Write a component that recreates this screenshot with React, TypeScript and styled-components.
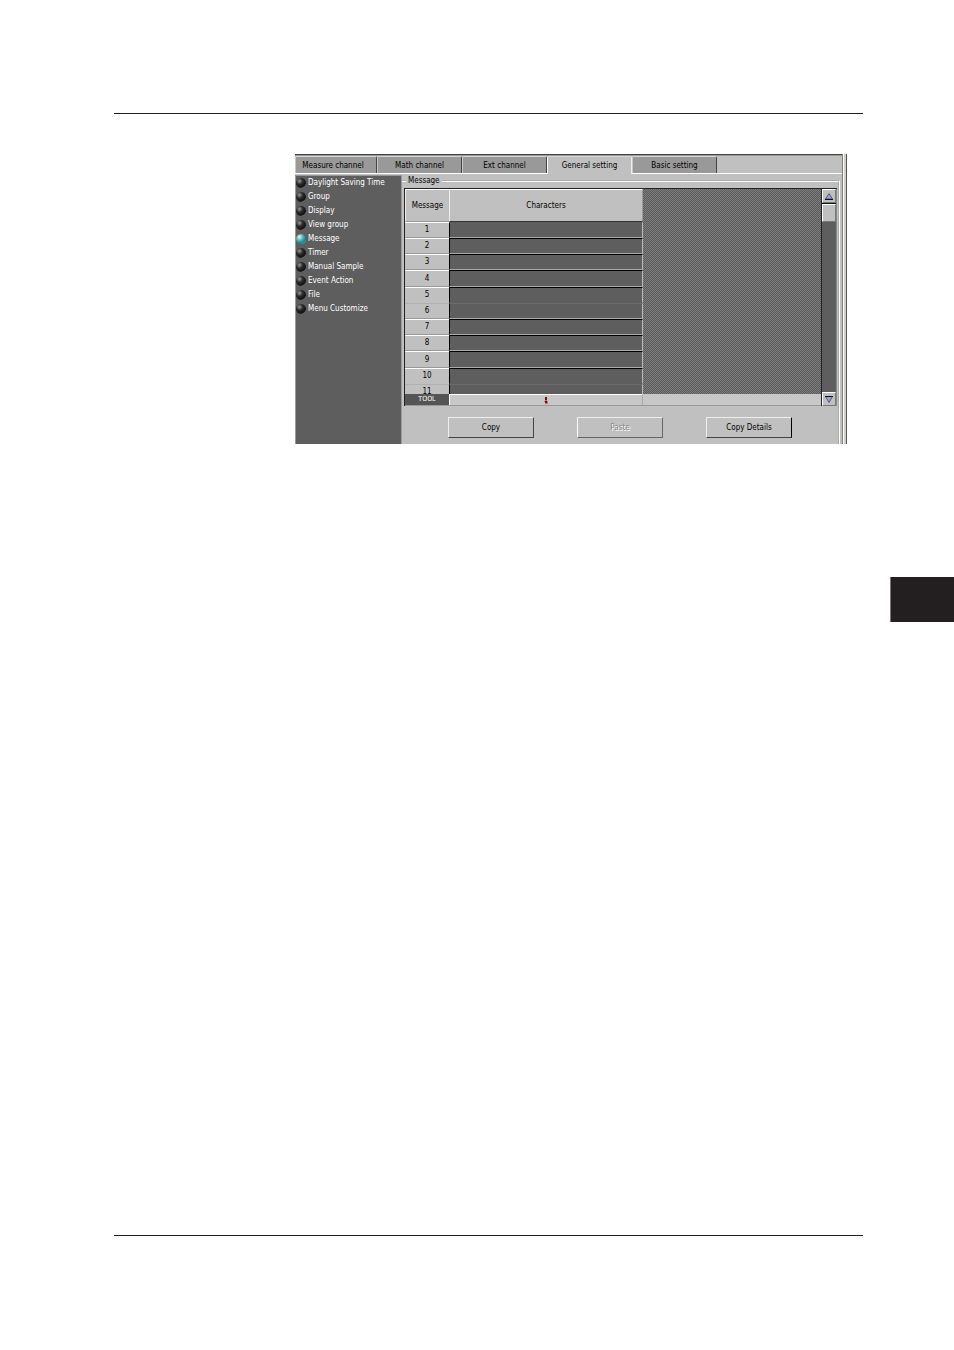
import React, { useState } from "react";
import styled, { createGlobalStyle, css } from "styled-components";

const GlobalStyle = createGlobalStyle`
  *, *::before, *::after { box-sizing: border-box; }
  body { margin: 0; background: #fff; }
  button, input { font: inherit; color: inherit; }
`;

const face = "#c0c0c0";
const shade = "#5e5e5e";
const mid = "#999";

const Page = styled.div`
  display: grid;
  grid-template-columns: 114px minmax(0, 1fr) 91px;
  min-height: 100vh;
  padding: 113px 0 114px;
  font-family: "DejaVu Sans Condensed", "DejaVu Sans", "Liberation Sans", sans-serif;
  font-size: 8px;
  line-height: 12px;
  color: #000;
`;

const Sheet = styled.main`
  grid-column: 2;
  border-top: 1px solid #231f20;
  border-bottom: 1px solid #231f20;
  padding: 40px 16px 40px 181px;
`;

const ThumbTab = styled.aside`
  grid-column: 3;
  justify-self: end;
  width: 64px;
  height: 45px;
  margin-top: 464px;
  background: #231f20;
  border-left: 1px solid #777;
`;

const Window = styled.section`
  display: flex;
  height: 290px;
  overflow: hidden;
  background: ${face};
`;

const Workspace = styled.div`
  flex: 1;
  min-width: 0;
  display: flex;
  flex-direction: column;
  border-top: 1px solid #444;
`;

const WindowEdge = styled.div`
  width: 5px;
  border-left: 1px solid #808080;
  border-right: 1px solid #555;
  background: linear-gradient(90deg, #fff 1px, #d4d0c8 1px);
`;

const TabBar = styled.div`
  display: flex;
  height: 19px;
  padding-top: 1px;
  box-shadow: inset 0 1px #999, inset 0 -1px #fff;
`;

const Tab = styled.button<{ $active: boolean; $clipped?: boolean }>`
  flex: 0 0 ${(p) => (p.$clipped ? 82 : 85)}px;
  min-width: 0;
  height: ${(p) => (p.$active ? 18 : 17)}px;
  padding: 0 ${(p) => (p.$clipped ? 6 : 0)}px 0 0;
  border: 0;
  border-top: 1px solid #d8d8d8;
  border-left: 1px solid ${(p) => (p.$active ? "#fff" : "#c8c8c8")};
  border-right: 1px solid ${(p) => (p.$active ? "#eee" : "#444")};
  border-radius: 2px 2px 0 0;
  background: ${(p) => (p.$active ? face : mid)};
  line-height: 15px;
  white-space: nowrap;
`;

const Body = styled.div`
  flex: 1;
  min-height: 0;
  display: flex;
  padding-top: 1px;
`;

const Sidebar = styled.div`
  flex: 0 0 107px;
  min-width: 0;
  border: solid ${mid};
  border-width: 1px 1px 0;
  background: ${shade};
  color: #fff;
`;

const Option = styled.label`
  display: flex;
  align-items: center;
  gap: 2px;
  height: 14px;
  white-space: nowrap;
`;

const Bullet = styled.input`
  appearance: none;
  flex: none;
  width: 10px;
  height: 10px;
  margin: 0;
  border-radius: 50%;
  background: radial-gradient(circle at 35% 30%, #999 0, #2a2a2a 35%, #111 68%, #aaa 90%);
  &:checked {
    background: radial-gradient(circle at 35% 30%, #d8ffff 0, #4db8bc 35%, #217a80 68%, #cfe8e8 90%);
  }
`;

const Group = styled.fieldset`
  flex: 1;
  min-width: 0;
  margin: 1px 2px 0 0;
  padding: 2px 0 0 2px;
  border: 2px groove #fff;
  border-width: 2px 2px 0 0;
`;

const Legend = styled.legend`
  margin-left: 2px;
  padding: 0 2px;
  line-height: 10px;
`;

const Sheetbox = styled.div`
  display: flex;
  height: 218px;
  border-top: 1px solid #222;
  border-left: 1px solid #222;
  margin-right: 1px;
`;

const Pane = styled.div`
  flex: 1;
  min-width: 0;
  display: flex;
  flex-direction: column;
`;

const Viewport = styled.div`
  flex: 1;
  min-height: 0;
  overflow: hidden;
  background: repeating-conic-gradient(#5c5c5c 0 25%, #7c7c7c 0 50%) 0 0 / 2px 2px;
`;

const Table = styled.table`
  width: 238px;
  table-layout: fixed;
  border-collapse: separate;
  border-spacing: 0;
  background: ${face};
`;

const cell = css`
  padding: 0;
  font-weight: 400;
  text-align: center;
  vertical-align: middle;
`;

const HeadCell = styled.th<{ $narrow?: boolean }>`
  ${cell}
  width: ${(p) => (p.$narrow ? "44px" : "auto")};
  height: 33px;
  border-top: 1px solid #fff;
  border-left: 1px solid #eee;
  border-right: ${(p) => (p.$narrow ? 0 : 1)}px solid ${mid};
  border-bottom: 1px solid ${(p) => (p.$narrow ? "#999" : "#333")};
`;

const NumberCell = styled.th`
  ${cell}
  border-top: 1px solid #fff;
  border-bottom: 1px solid ${mid};
`;

const TextCell = styled.td`
  ${cell}
  background: ${shade};
  border-left: 1px solid #000;
  border-right: 1px solid #bbb;
  border-top: 1px solid #000;
  border-bottom: 1px solid #aaa;
`;

const Row = styled.tr`
  height: 16px;
  &:nth-child(5n + 4) {
    height: 17px;
  }
  &:nth-child(5n) ${TextCell} {
    border-bottom-color: ${shade};
  }
  &:nth-child(5n) ${NumberCell} {
    border-bottom-color: ${face};
  }
  &:nth-child(5n + 6) ${TextCell} {
    border-top-color: #6c6c6c;
  }
  &:nth-child(5n + 6) ${NumberCell} {
    border-top-color: #b0b0b0;
  }
  &:first-child ${TextCell} {
    border-top-color: ${shade};
  }
`;

const CellInput = styled.input`
  display: block;
  width: 100%;
  height: 12px;
  padding: 0 2px;
  border: 0;
  outline: 0;
  background: transparent;
  color: #fff;
`;

const ToolRow = styled.div`
  display: flex;
  height: 12px;
  background: #c8c8c8;
  border-bottom: 1px solid ${mid};
`;

const ToolLabel = styled.div`
  flex: 0 0 44px;
  background: #555;
  color: #fff;
  font-size: 7px;
  line-height: 11px;
  text-align: center;
`;

const ToolSlot = styled.button`
  flex: 0 0 194px;
  display: flex;
  align-items: center;
  justify-content: center;
  padding: 0;
  border: 0;
  border-top: 1px solid #fff;
  border-left: 1px solid #fff;
  border-right: 1px solid #aaa;
  background: #c8c8c8;
`;

const ScrollBar = styled.div`
  flex: 0 0 16px;
  display: flex;
  flex-direction: column;
  border-left: 1px solid #222;
  border-right: 1px solid #888;
  background: ${shade};
`;

const raised = css`
  border: 1px solid;
  border-color: #fff #777 #777 #fff;
  background: ${face};
`;

const ArrowButton = styled.button`
  ${raised}
  flex: 0 0 14px;
  display: flex;
  align-items: center;
  justify-content: center;
  padding: 0;
`;

const Track = styled.div`
  flex: 1;
  border-top: 1px solid #111;
`;

const Thumb = styled.div`
  ${raised}
  height: 18px;
`;

const Actions = styled.div`
  display: flex;
  justify-content: center;
  gap: 43px;
  padding: 11px 2px 0 0;
`;

const Action = styled.button<{ $strong?: boolean }>`
  width: 86px;
  height: 21px;
  padding: 0;
  border: 1px solid;
  border-color: #eee ${(p) => (p.$strong ? "#000" : "#444")} #444 #eee;
  background: ${face};
  white-space: nowrap;
  &:disabled {
    color: #888;
    text-shadow: 1px 1px #fff;
    border-color: #eee #666 #666 #fff;
  }
`;

const tabs = ["Measure channel", "Math channel", "Ext channel", "General setting", "Basic setting"];
const sections = [
  "Daylight Saving Time",
  "Group",
  "Display",
  "View group",
  "Message",
  "Timer",
  "Manual Sample",
  "Event Action",
  "File",
  "Menu Customize",
];
const rows = Array.from({ length: 11 }, (_, i) => i + 1);

function Arrow({ down }: { down?: boolean }) {
  return (
    <svg width="10" height="9" viewBox="0 0 10 9" aria-hidden="true">
      {down ? (
        <>
          <path d="M1.5 1.5 L5 7.5 L8.5 1.5Z" fill="#a0a0d8" stroke="#55557c" />
          <path d="M1 1.5H9" stroke="#111" />
        </>
      ) : (
        <>
          <path d="M1.5 7 L5 1.5 L8.5 7Z" fill="#a0a0d8" stroke="#55557c" />
          <path d="M1 7.5H9" stroke="#111" />
        </>
      )}
    </svg>
  );
}

function ToolMark() {
  return (
    <svg width="4" height="8" viewBox="0 0 4 8" aria-hidden="true">
      <path d="M1 1H3V4H1Z M1 5H3V7H1Z" fill="#8c0808" />
      <path d="M0 5H1V6H0Z M3 5H4V7H3Z M1 7H4V8H1Z M1 4H3V5H1Z" fill="#b07878" />
    </svg>
  );
}

export default function App() {
  const [tab, setTab] = useState("General setting");
  const [section, setSection] = useState("Message");
  return (
    <>
      <GlobalStyle />
      <Page>
        <Sheet>
          <Window aria-label="Settings">
            <Workspace>
              <TabBar role="tablist">
                {tabs.map((name, i) => (
                  <Tab
                    key={name}
                    type="button"
                    role="tab"
                    aria-selected={tab === name}
                    $active={tab === name}
                    $clipped={i === 0}
                    onClick={() => setTab(name)}
                  >
                    {name}
                  </Tab>
                ))}
              </TabBar>
              <Body>
                <Sidebar role="radiogroup" aria-label="Section">
                  {sections.map((name) => (
                    <Option key={name}>
                      <Bullet
                        type="radio"
                        name="section"
                        checked={section === name}
                        onChange={() => setSection(name)}
                      />
                      {name}
                    </Option>
                  ))}
                </Sidebar>
                <Group>
                  <Legend>Message</Legend>
                  <Sheetbox>
                    <Pane>
                      <Viewport>
                        <Table>
                          <thead>
                            <tr>
                              <HeadCell scope="col" $narrow>Message</HeadCell>
                              <HeadCell scope="col">Characters</HeadCell>
                            </tr>
                          </thead>
                          <tbody>
                            {rows.map((n) => (
                              <Row key={n}>
                                <NumberCell scope="row">{n}</NumberCell>
                                <TextCell>
                                  <CellInput type="text" aria-label={`Message ${n} characters`} />
                                </TextCell>
                              </Row>
                            ))}
                          </tbody>
                        </Table>
                      </Viewport>
                      <ToolRow>
                        <ToolLabel>TOOL</ToolLabel>
                        <ToolSlot type="button" aria-label="Character tool">
                          <ToolMark />
                        </ToolSlot>
                      </ToolRow>
                    </Pane>
                    <ScrollBar>
                      <ArrowButton type="button" aria-label="Scroll up">
                        <Arrow />
                      </ArrowButton>
                      <Track>
                        <Thumb />
                      </Track>
                      <ArrowButton type="button" aria-label="Scroll down">
                        <Arrow down />
                      </ArrowButton>
                    </ScrollBar>
                  </Sheetbox>
                  <Actions>
                    <Action type="button">Copy</Action>
                    <Action type="button" disabled>Paste</Action>
                    <Action type="button" $strong>Copy Details</Action>
                  </Actions>
                </Group>
              </Body>
            </Workspace>
            <WindowEdge />
          </Window>
        </Sheet>
        <ThumbTab aria-label="Chapter" />
      </Page>
    </>
  );
}
